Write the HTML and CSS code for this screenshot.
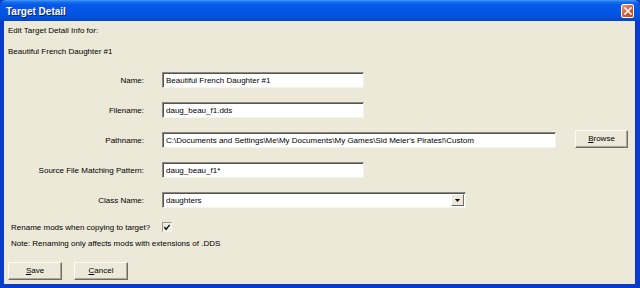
FILE: index.html
```html
<!DOCTYPE html>
<html>
<head>
<meta charset="utf-8">
<link rel="stylesheet" href="styles.css">
</head>
<body>
<div class="window">
  <div class="titlebar">
    <span class="title">Target Detail</span>
    <span class="close"><svg width="8" height="8" viewBox="0 0 8 8"><path d="M1 1 L7 7 M7 1 L1 7" stroke="#fff" stroke-width="1.6" stroke-linecap="square"/></svg></span>
  </div>
  <div class="client">
    <div class="line intro">Edit Target Detail Info for:</div>
    <div class="line target">Beautiful French Daughter #1</div>
    <div class="form">
      <label class="lbl">Name:</label>
      <div class="field w-short">Beautiful French Daughter #1</div>
      <span></span>
      <label class="lbl">Filename:</label>
      <div class="field w-short">daug_beau_f1.dds</div>
      <span></span>
      <label class="lbl">Pathname:</label>
      <div class="field w-long">C:\Documents and Settings\Me\My Documents\My Games\Sid Meier's Pirates!\Custom</div>
      <button class="btn browse"><u>B</u>rowse</button>
      <label class="lbl">Source File Matching Pattern:</label>
      <div class="field w-short">daug_beau_f1*</div>
      <span></span>
      <label class="lbl">Class Name:</label>
      <div class="field combo w-mid"><span class="combo-text">daughters</span><span class="arrow"><svg width="5" height="3" viewBox="0 0 5 3"><path d="M0 0 H5 L2.5 3 Z" fill="#000"/></svg></span></div>
      <span></span>
    </div>
    <div class="rename">
      <span class="rename-text">Rename mods when copying to target?</span>
      <span class="check"><svg width="9" height="9" viewBox="0 0 9 9"><path d="M1.5 4 L3.5 6.5 L7.5 1.5" stroke="#111" stroke-width="1.6" fill="none"/></svg></span>
    </div>
    <div class="line note">Note: Renaming only affects mods with extensions of .DDS</div>
    <div class="actions">
      <button class="btn"><u>S</u>ave</button>
      <button class="btn"><u>C</u>ancel</button>
    </div>
  </div>
</div>
</body>
</html>
```
FILE: styles.css
```css
* { box-sizing: border-box; }
html, body { margin: 0; padding: 0; background: #ffffff; }
body { width: 640px; height: 288px; overflow: hidden; }

.window {
  width: 640px;
  height: 288px;
  background: #0a3ccc;
  display: flex;
  flex-direction: column;
  font-family: "Liberation Sans", Arial, sans-serif;
  font-size: 8px;
  color: #000;
}

.titlebar {
  height: 21px;
  flex: none;
  display: flex;
  align-items: center;
  justify-content: space-between;
  padding: 0 6px 0 6px;
  background: linear-gradient(#4a9af8 0, #1470ee 2px, #0558e8 5px, #0255e4 60%, #0450d8 85%, #0345c8 100%);
  border-radius: 6px 6px 0 0;
}

.title {
  color: #fff;
  font-weight: bold;
  font-size: 10px;
  text-shadow: 1px 1px 0 #0a1e80;
  padding-top: 1px;
}

.close {
  width: 13px;
  height: 14px;
  border: 1px solid #fff;
  border-radius: 2px;
  background: linear-gradient(135deg, #f09a80 0, #e0603e 45%, #c8401c 100%);
  display: flex;
  align-items: center;
  justify-content: center;
  margin-top: 1px;
}

.client {
  flex: 1;
  margin: 0 5px 4px 4px;
  background: #ece9d8;
  padding: 4px 0 0 4px;
  display: flex;
  flex-direction: column;
  border-right: 1px solid #e8e6d8;
}

.line {
  height: 12px;
  line-height: 12px;
  white-space: nowrap;
}

.target { margin-top: 9px; }

.form {
  margin-top: 14px;
  margin-left: -4px;
  display: grid;
  grid-template-columns: 140px auto 1fr;
  grid-auto-rows: 16px;
  column-gap: 18px;
  row-gap: 14px;
  align-items: center;
}

.lbl {
  text-align: right;
  white-space: nowrap;
  line-height: 16px;
  padding-top: 1px;
}

.field {
  height: 16px;
  background: #fff;
  border: 1px solid;
  border-color: #8a8880 #f4f3ee #f4f3ee #8a8880;
  box-shadow: inset 1px 1px 0 #55544e;
  padding: 0 3px;
  line-height: 15px;
  white-space: nowrap;
  overflow: hidden;
}

.w-short { width: 202px; }
.w-long { width: 394px; }
.w-mid { width: 304px; }

.combo {
  display: flex;
  align-items: stretch;
  padding-right: 1px;
}

.combo-text { flex: 1; }

.arrow {
  width: 13px;
  margin: 1px 0 1px 0;
  background: #ece9d8;
  border: 1px solid;
  border-color: #fff #6e6c64 #6e6c64 #fff;
  display: flex;
  align-items: center;
  justify-content: center;
}

.btn {
  font-family: "Liberation Sans", Arial, sans-serif;
  font-size: 8px;
  color: #000;
  background: #ece9d8;
  border: 1px solid;
  border-color: #fbfaf5 #6e6c64 #6e6c64 #fbfaf5;
  box-shadow: inset -1px -1px 0 #aca899;
  width: 54px;
  height: 18px;
  padding: 0;
  margin: 0;
  line-height: 16px;
}

.browse {
  justify-self: start;
  margin-left: 1px;
  margin-top: -3px;
  width: 53px;
}

.rename {
  margin-top: 13px;
  display: flex;
  align-items: center;
  height: 12px;
}

.rename-text {
  padding-left: 3px;
  width: 154px;
  white-space: nowrap;
}

.check {
  width: 10px;
  height: 10px;
  border: 1px solid;
  border-color: #9a988e #f4f3ee #f4f3ee #9a988e;
  background: #f3f2ea;
  display: flex;
  align-items: center;
  justify-content: center;
}

.note {
  margin-top: 5px;
  padding-left: 3px;
}

.actions {
  margin-top: 12px;
  display: flex;
  gap: 12px;
}
```
